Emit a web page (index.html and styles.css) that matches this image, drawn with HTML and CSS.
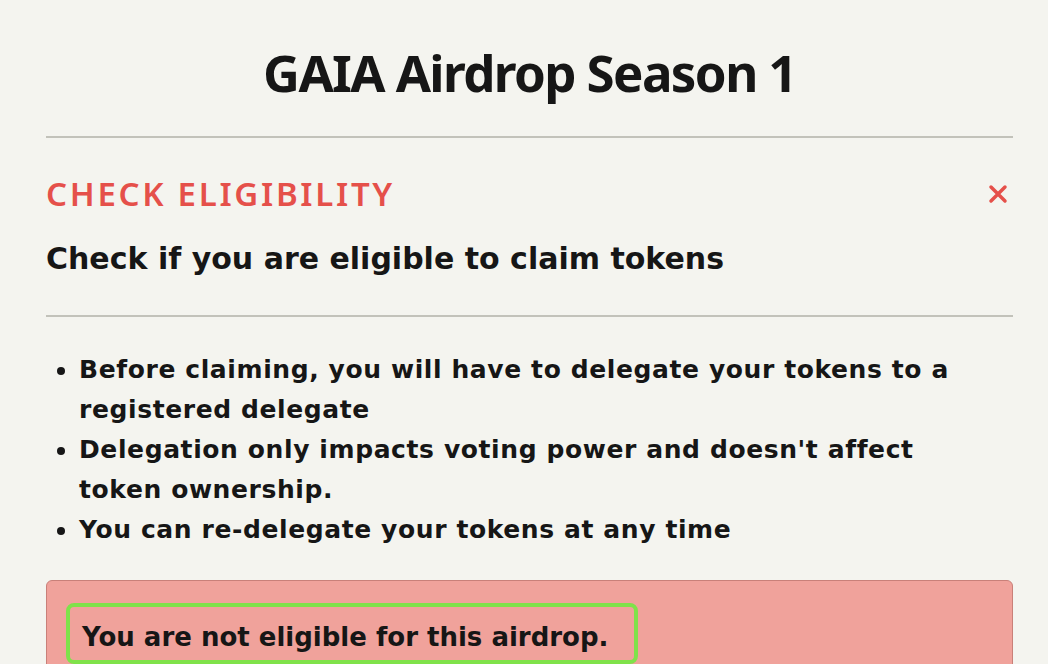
FILE: index.html
```html
<!DOCTYPE html>
<html lang="en">
<head>
  <meta charset="UTF-8">
  <title>GAIA Airdrop Season 1</title>
  <link rel="stylesheet" href="styles.css">
</head>
<body>
  <main class="panel">
    <h1 class="title">GAIA Airdrop Season 1</h1>
    <hr class="divider">

    <div class="head">
      <h2 class="eyebrow">CHECK ELIGIBILITY</h2>
      <button class="close" aria-label="Close">
        <svg width="20" height="20" viewBox="0 0 20 20">
          <path d="M3 3 L17 17 M17 3 L3 17" stroke="#e5504a" stroke-width="3.5" stroke-linecap="round"/>
        </svg>
      </button>
    </div>
    <p class="lead">Check if you are eligible to claim tokens</p>
    <hr class="divider">

    <ul class="notes">
      <li>Before claiming, you will have to delegate your tokens to a registered delegate</li>
      <li>Delegation only impacts voting power and doesn't affect token ownership.</li>
      <li>You can re-delegate your tokens at any time</li>
    </ul>

    <!-- Result -->
    <div class="alert">
      <div class="alert-msg">You are not eligible for this airdrop.</div>
      <div class="alert-note">(see reasons)</div>
    </div>
  </main>
</body>
</html>
```

FILE: styles.css
```css
body {
  background-color: #f4f4ef;
  color: #161616;
  font-family: 'DejaVu Sans', 'Noto Sans', sans-serif;
  margin: 0;
}

.panel {
  padding: 42px 35px 0 46px;
}

.title {
  font-family: 'Noto Sans', sans-serif;
  font-size: 51px;
  line-height: 60px;
  font-weight: 700;
  letter-spacing: -1.6px;
  text-align: center;
  margin: 0 0 34px;
}

.divider {
  border: none;
  height: 2px;
  background-color: #c2c2ba;
  margin: 0;
}

.head {
  display: flex;
  align-items: center;
  justify-content: space-between;
  margin-top: 36px;
}

.eyebrow {
  font-family: 'Noto Sans', sans-serif;
  font-size: 33px;
  line-height: 40px;
  font-weight: 600;
  letter-spacing: 2.7px;
  color: #e5504a;
  margin: 0;
}

.close {
  background: none;
  border: none;
  padding: 0;
  margin-right: 5px;
  display: flex;
  cursor: pointer;
}

.lead {
  font-size: 30px;
  line-height: 40px;
  font-weight: 700;
  margin: 25px 0 36px;
}

.notes {
  font-size: 25px;
  line-height: 40px;
  font-weight: 700;
  letter-spacing: 0.6px;
  margin: 33px 0 30px;
  padding: 0 10px 0 33px;
}

.alert {
  background-color: #f0a29b;
  border: 1px solid #c98079;
  border-radius: 6px;
  padding: 22px 19px 20px;
  font-size: 26px;
  line-height: 34px;
  font-weight: 700;
}

.alert-msg {
  display: inline-block;
  border: 4px solid #7fe24a;
  border-radius: 8px;
  padding: 13px 26px 6px 12px;
}

.alert-note {
  margin-left: 16px;
}
```
